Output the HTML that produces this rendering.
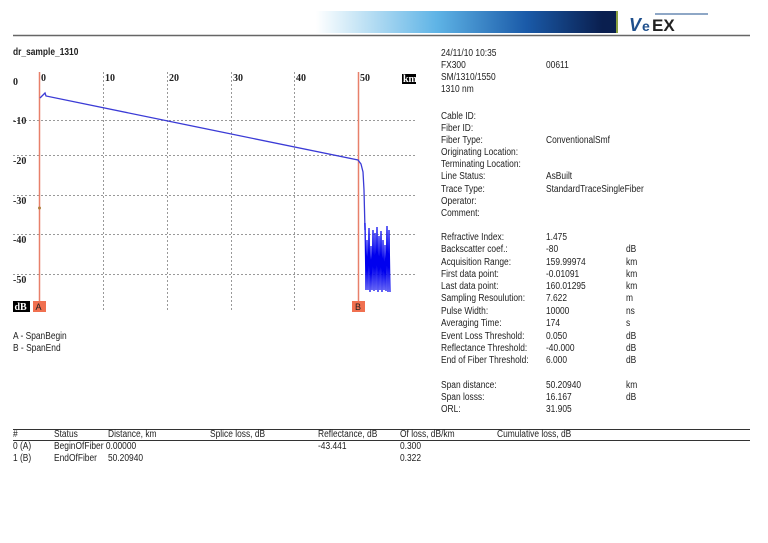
<!DOCTYPE html>
<html><head><meta charset="utf-8"><style>
body{margin:0;background:#fff;width:768px;height:543px;position:relative;overflow:hidden;font-family:"Liberation Sans Narrow","Liberation Sans",sans-serif;color:#222}
.t{position:absolute;font-size:10px;line-height:11px;white-space:nowrap;transform:scaleX(.84);transform-origin:0 0}
.b{font-weight:bold;font-family:"Liberation Serif",serif;transform:none;font-size:10px}
</style></head><body>
<div style="position:absolute;left:316px;top:11px;width:301px;height:22px;background:linear-gradient(90deg,#fff 0%,#cfe9f7 12%,#5fb4e6 40%,#1a5aa8 70%,#0a1f4f 95%,#0a1f4f 100%)"></div>
<div style="position:absolute;left:616px;top:11px;width:2px;height:22px;background:#8aa040"></div>
<svg style="position:absolute;left:0;top:0" width="768" height="543">
<text x="629" y="31" font-family="Liberation Sans" font-weight="bold" font-style="italic" font-size="18" fill="#1e4f8c">V</text>
<text x="642" y="31" font-family="Liberation Sans" font-weight="bold" font-size="14" fill="#1e4f8c">e</text>
<text x="652" y="31" font-family="Liberation Sans" font-weight="bold" font-size="17" fill="#222">EX</text>
<line x1="655" y1="14" x2="708" y2="14" stroke="#1e4f8c" stroke-width="1"/>
<line x1="13" y1="35.5" x2="750" y2="35.5" stroke="#666" stroke-width="1.5"/>
<g stroke="#999" stroke-dasharray="2,2" stroke-width="1">
<line x1="13" y1="120.5" x2="415" y2="120.5"/><line x1="13" y1="155.5" x2="415" y2="155.5"/>
<line x1="13" y1="195.5" x2="415" y2="195.5"/><line x1="13" y1="234.5" x2="415" y2="234.5"/>
<line x1="13" y1="274.5" x2="415" y2="274.5"/>
<line x1="103.5" y1="72" x2="103.5" y2="311"/><line x1="167.5" y1="72" x2="167.5" y2="311"/>
<line x1="231.5" y1="72" x2="231.5" y2="311"/><line x1="294.5" y1="72" x2="294.5" y2="311"/>
</g>
<line x1="39.5" y1="72" x2="39.5" y2="304" stroke="#e8806a" stroke-width="1.5"/>
<line x1="358.5" y1="72" x2="358.5" y2="304" stroke="#e8806a" stroke-width="1.5"/>
<polyline fill="none" stroke="#3b3bd6" stroke-width="1.3" points="40,98 45,93 46,96 358,160 361,164 363,172 364,190 365,230"/>
<polyline fill="none" stroke="#0000ee" stroke-width="1.2" points="365,223 366,290 367,240 368,290 369,228 370,292 371,246 372,290 373,230 374,291 375,233 376,290 377,227 378,292 379,236 380,290 381,231 382,292 383,240 384,290 385,245 386,291 387,226 388,292 389,230 390,292"/>
<circle cx="39.5" cy="208" r="1.5" fill="#b08040"/>
<rect x="13" y="301" width="17" height="11" fill="#000"/>
<text x="14.5" y="310" font-family="Liberation Serif" font-weight="bold" font-size="10" fill="#fff">dB</text>
<rect x="33" y="301" width="13" height="11" fill="#f07050"/>
<text x="35.5" y="310" font-family="Liberation Sans" font-size="9" fill="#222">A</text>
<rect x="352" y="301" width="13" height="11" fill="#f07050"/>
<text x="355" y="310" font-family="Liberation Sans" font-size="9" fill="#222">B</text>
<rect x="402" y="74" width="14" height="10" fill="#000"/>
<text x="403" y="82" font-family="Liberation Serif" font-weight="bold" font-size="10" fill="#fff">km</text>
<line x1="13" y1="429.5" x2="750" y2="429.5" stroke="#333" stroke-width="1"/>
<line x1="13" y1="440.5" x2="750" y2="440.5" stroke="#333" stroke-width="1"/>
</svg>
<div class="t b" style="left:13px;top:47px;font-family:'Liberation Sans';transform:scaleX(.84)">dr_sample_1310</div>
<div class="t b" style="left:13px;top:77px">0</div>
<div class="t b" style="left:13px;top:116px">-10</div>
<div class="t b" style="left:13px;top:156px">-20</div>
<div class="t b" style="left:13px;top:196px">-30</div>
<div class="t b" style="left:13px;top:235px">-40</div>
<div class="t b" style="left:13px;top:275px">-50</div>
<div class="t b" style="left:41px;top:73px">0</div>
<div class="t b" style="left:105px;top:73px">10</div>
<div class="t b" style="left:169px;top:73px">20</div>
<div class="t b" style="left:233px;top:73px">30</div>
<div class="t b" style="left:296px;top:73px">40</div>
<div class="t b" style="left:360px;top:73px">50</div>
<div class="t" style="left:13px;top:331px">A - SpanBegin</div>
<div class="t" style="left:13px;top:343px">B - SpanEnd</div>

<div class="t" style="left:441px;top:48px">24/11/10 10:35</div>
<div class="t" style="left:441px;top:60px">FX300</div><div class="t" style="left:546px;top:60px">00611</div>
<div class="t" style="left:441px;top:72px">SM/1310/1550</div>
<div class="t" style="left:441px;top:84px">1310 nm</div>
<div class="t" style="left:441px;top:111px">Cable ID:</div>
<div class="t" style="left:441px;top:123px">Fiber ID:</div>
<div class="t" style="left:441px;top:135px">Fiber Type:</div><div class="t" style="left:546px;top:135px">ConventionalSmf</div>
<div class="t" style="left:441px;top:147px">Originating Location:</div>
<div class="t" style="left:441px;top:159px">Terminating Location:</div>
<div class="t" style="left:441px;top:171px">Line Status:</div><div class="t" style="left:546px;top:171px">AsBuilt</div>
<div class="t" style="left:441px;top:184px">Trace Type:</div><div class="t" style="left:546px;top:184px">StandardTraceSingleFiber</div>
<div class="t" style="left:441px;top:196px">Operator:</div>
<div class="t" style="left:441px;top:208px">Comment:</div>

<div class="t" style="left:441px;top:232px">Refractive Index:</div><div class="t" style="left:546px;top:232px">1.475</div>
<div class="t" style="left:441px;top:244px">Backscatter coef.:</div><div class="t" style="left:546px;top:244px">-80</div><div class="t" style="left:626px;top:244px">dB</div>
<div class="t" style="left:441px;top:257px">Acquisition Range:</div><div class="t" style="left:546px;top:257px">159.99974</div><div class="t" style="left:626px;top:257px">km</div>
<div class="t" style="left:441px;top:269px">First data point:</div><div class="t" style="left:546px;top:269px">-0.01091</div><div class="t" style="left:626px;top:269px">km</div>
<div class="t" style="left:441px;top:281px">Last data point:</div><div class="t" style="left:546px;top:281px">160.01295</div><div class="t" style="left:626px;top:281px">km</div>
<div class="t" style="left:441px;top:293px">Sampling Resoulution:</div><div class="t" style="left:546px;top:293px">7.622</div><div class="t" style="left:626px;top:293px">m</div>
<div class="t" style="left:441px;top:306px">Pulse Width:</div><div class="t" style="left:546px;top:306px">10000</div><div class="t" style="left:626px;top:306px">ns</div>
<div class="t" style="left:441px;top:318px">Averaging Time:</div><div class="t" style="left:546px;top:318px">174</div><div class="t" style="left:626px;top:318px">s</div>
<div class="t" style="left:441px;top:331px">Event Loss Threshold:</div><div class="t" style="left:546px;top:331px">0.050</div><div class="t" style="left:626px;top:331px">dB</div>
<div class="t" style="left:441px;top:343px">Reflectance Threshold:</div><div class="t" style="left:546px;top:343px">-40.000</div><div class="t" style="left:626px;top:343px">dB</div>
<div class="t" style="left:441px;top:355px">End of Fiber Threshold:</div><div class="t" style="left:546px;top:355px">6.000</div><div class="t" style="left:626px;top:355px">dB</div>
<div class="t" style="left:441px;top:380px">Span distance:</div><div class="t" style="left:546px;top:380px">50.20940</div><div class="t" style="left:626px;top:380px">km</div>
<div class="t" style="left:441px;top:392px">Span losss:</div><div class="t" style="left:546px;top:392px">16.167</div><div class="t" style="left:626px;top:392px">dB</div>
<div class="t" style="left:441px;top:404px">ORL:</div><div class="t" style="left:546px;top:404px">31.905</div>

<div class="t" style="left:13px;top:429px">#</div>
<div class="t" style="left:54px;top:429px">Status</div>
<div class="t" style="left:108px;top:429px">Distance, km</div>
<div class="t" style="left:210px;top:429px">Splice loss, dB</div>
<div class="t" style="left:318px;top:429px">Reflectance, dB</div>
<div class="t" style="left:400px;top:429px">Of loss, dB/km</div>
<div class="t" style="left:497px;top:429px">Cumulative loss, dB</div>
<div class="t" style="left:13px;top:441px">0 (A)</div><div class="t" style="left:54px;top:441px">BeginOfFiber 0.00000</div><div class="t" style="left:318px;top:441px">-43.441</div><div class="t" style="left:400px;top:441px">0.300</div>
<div class="t" style="left:13px;top:453px">1 (B)</div><div class="t" style="left:54px;top:453px">EndOfFiber</div><div class="t" style="left:108px;top:453px">50.20940</div><div class="t" style="left:400px;top:453px">0.322</div>
</body></html>
